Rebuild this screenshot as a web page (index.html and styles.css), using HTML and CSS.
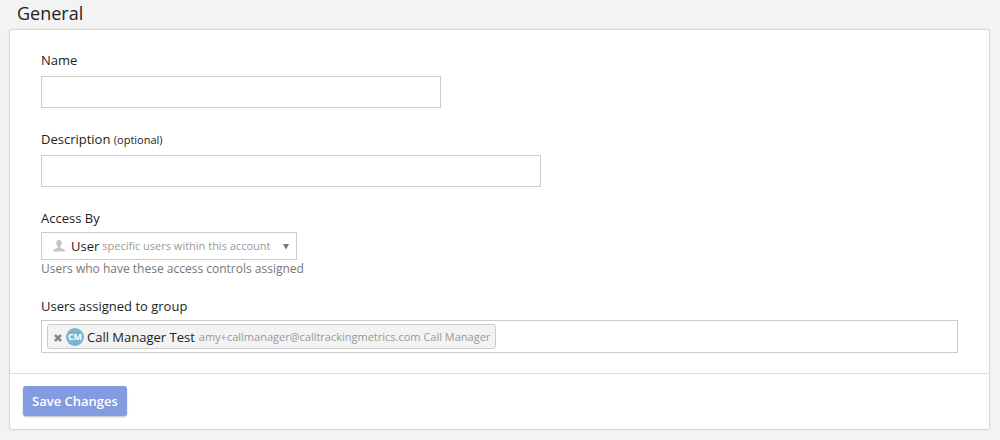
FILE: index.html
```html
<!DOCTYPE html>
<html lang="en">
<head>
<meta charset="utf-8">
<title>General</title>
<link rel="stylesheet" href="styles.css">
</head>
<body>
<h1 class="title">General</h1>
<form class="panel">
  <div class="fields">
    <div class="field">
      <label class="label" for="name">Name</label>
      <input class="text name" id="name" type="text">
    </div>
    <div class="field">
      <label class="label" for="desc">Description <small class="optional">(optional)</small></label>
      <input class="text desc" id="desc" type="text">
    </div>
    <div class="field access">
      <label class="label" for="access">Access By</label>
      <button class="picker" id="access" type="button" aria-haspopup="listbox">
        <svg class="person" viewBox="0 0 12 12" aria-hidden="true"><path d="M6 0C4.300 0 3.300 1.200 3.300 3c0 1.500.6 2.800 1.500 3.500v1.300C4.300 8.600.8 8.800.3 10L0 11.500h12l-.3-1.500C11.200 8.800 7.700 8.600 7.200 7.800V6.500C8.100 5.800 8.700 4.500 8.700 3 8.700 1.200 7.700 0 6 0z"/></svg>
        <span class="main">User</span>
        <span class="sub">specific users within this account</span>
        <svg class="arrow" viewBox="0 0 6 6" aria-hidden="true"><path d="M0 0h6L3 5.500z"/></svg>
      </button>
      <p class="hint">Users who have these access controls assigned</p>
    </div>
    <div class="field users">
      <label class="label" for="users">Users assigned to group</label>
      <div class="tokens">
        <span class="token">
          <button class="remove" type="button" aria-label="Remove"><svg class="cross" viewBox="0 0 8 8" aria-hidden="true"><path d="M1 1l6 6M7 1L1 7"/></svg></button>
          <span class="avatar">CM</span>
          <span class="main">Call Manager Test</span>
          <span class="sub">amy+callmanager@calltrackingmetrics.com Call Manager</span>
        </span>
        <input class="search" id="users" type="text">
      </div>
    </div>
  </div>
  <div class="footer">
    <button class="save" type="submit">Save Changes</button>
  </div>
</form>
</body>
</html>
```
FILE: styles.css
```css
* { box-sizing: border-box; }
body {
  margin: 0;
  padding: 0 10px 10px 9px;
  background: #f3f3f3;
  color: #222;
  font: 13px/18px "Open Sans", sans-serif;
}
.title { margin: 0; padding: 0 8px 2px; font-size: 18px; line-height: 27px; font-weight: 400; }
.panel { background: #fff; border: 1px solid #d8d8d8; border-radius: 3px; box-shadow: 0 0 2px #ddd; }
.fields { display: flex; flex-direction: column; gap: 22px; padding: 21px 31px 20px; }
.field { display: flex; flex-direction: column; align-items: flex-start; }
.label { margin-bottom: 7px; }
.optional { font-size: 11px; line-height: 1; }
.text { height: 32px; max-width: 100%; padding: 4px 8px; border: 1px solid #ccc; background: #fff; font: inherit; }
.name { width: 400px; }
.desc { width: 500px; }
.access .label, .users .label { margin-bottom: 5px; }
.access { margin-bottom: -3px; }
.picker { display: flex; align-items: center; height: 28px; padding: 0 6px 0 11px; border: 1px solid #ccc; background: #fff; color: #222; font: inherit; }
.person { width: 12px; height: 12px; margin-right: 6px; fill: #c4c4c4; }
.main { margin-right: 3px; }
.sub { color: #999; font-size: 11px; }
.arrow { width: 6px; height: 6px; margin: 2px 1px 0 13px; fill: #777; }
.hint { margin: 0; color: #777; font-size: 12px; }
.tokens { display: flex; align-items: center; width: 100%; height: 33px; padding: 0 5px; border: 1px solid #ccc; }
.token { display: flex; flex: none; align-items: center; height: 25px; padding: 0 5px 0 6px; border: 1px solid #ccc; border-radius: 3px; background: #f3f3f3; }
.token .main { margin-right: 4px; }
.remove { display: flex; margin: 2px 4px 0 0; padding: 0; border: 0; background: none; }
.cross { width: 8px; height: 8px; stroke: #888; stroke-width: 2.500; }
.avatar { width: 18px; height: 18px; margin-right: 3px; border-radius: 50%; background: #7ab6cf; color: #fff; font-size: 9px; font-weight: 700; text-align: center; }
.search { flex: 1; min-width: 0; border: 0; outline: 0; background: none; font: inherit; }
.footer { padding: 12px 13px 13px; border-top: 1px solid #ddd; }
.save { display: block; height: 30px; padding: 0 9px; border: 0; border-radius: 3px; background: #839be0; color: #fff; font: 600 13px/18px "Open Sans", sans-serif; box-shadow: 0 1px 2px #bbb; }
```
